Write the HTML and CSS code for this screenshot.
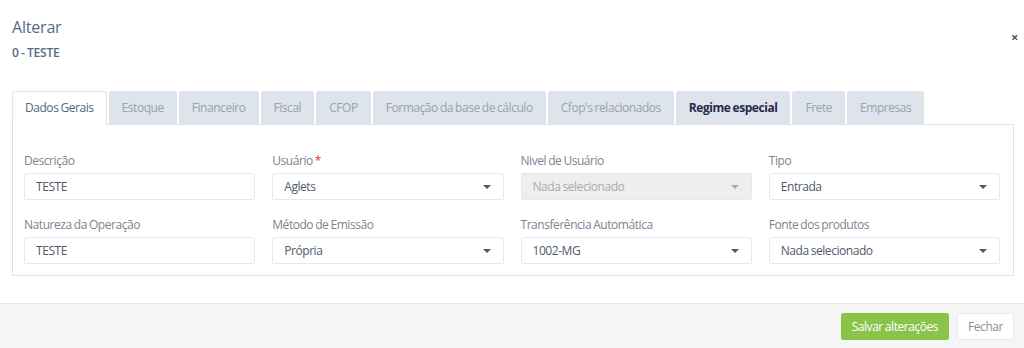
FILE: index.html
```html
<!DOCTYPE html>
<html>
<head>
    <title>Alterar</title>
    <link rel="stylesheet" href="styles.css">
</head>
<body>
    <div class="modal">
        <div class="modal-header">
            <div>
                <h1>Alterar</h1>
                <div class="subtitle">0 - TESTE</div>
            </div>
            <span class="close">&times;</span>
        </div>

        <div class="modal-body">
            <ul class="tabs">
                <li class="tab active">Dados Gerais</li>
                <li class="tab">Estoque</li>
                <li class="tab">Financeiro</li>
                <li class="tab">Fiscal</li>
                <li class="tab">CFOP</li>
                <li class="tab">Formação da base de cálculo</li>
                <li class="tab">Cfop's relacionados</li>
                <li class="tab strong">Regime especial</li>
                <li class="tab">Frete</li>
                <li class="tab">Empresas</li>
            </ul>

            <div class="panel">
                <div class="field">
                    <label>Descrição</label>
                    <div class="input">TESTE</div>
                </div>
                <div class="field">
                    <label>Usuário <span class="req">*</span></label>
                    <div class="input select">Aglets<span class="caret"></span></div>
                </div>
                <div class="field">
                    <label>Nivel de Usuário</label>
                    <div class="input select disabled">Nada selecionado<span class="caret"></span></div>
                </div>
                <div class="field">
                    <label>Tipo</label>
                    <div class="input select">Entrada<span class="caret"></span></div>
                </div>
                <div class="field">
                    <label>Natureza da Operação</label>
                    <div class="input">TESTE</div>
                </div>
                <div class="field">
                    <label>Método de Emissão</label>
                    <div class="input select">Própria<span class="caret"></span></div>
                </div>
                <div class="field">
                    <label>Transferência Automática</label>
                    <div class="input select">1002-MG<span class="caret"></span></div>
                </div>
                <div class="field">
                    <label>Fonte dos produtos</label>
                    <div class="input select">Nada selecionado<span class="caret"></span></div>
                </div>
            </div>
        </div>

        <div class="modal-footer">
            <button class="btn btn-success">Salvar alterações</button>
            <button class="btn btn-default">Fechar</button>
        </div>
    </div>
</body>
</html>
```

FILE: styles.css
```css
body {
    margin: 0;
    background: #fff;
    font-family: 'Open Sans', 'Liberation Sans', sans-serif;
    font-size: 12px;
    letter-spacing: -0.45px;
    word-spacing: -0.6px;
    color: #4b5563;
}
.modal {
    width: 1024px;
    height: 348px;
    display: flex;
    flex-direction: column;
}
.modal-header {
    display: flex;
    justify-content: space-between;
    align-items: flex-start;
    padding: 15px 6px 0 12px;
    height: 76px;
    box-sizing: border-box;
}
.modal-header h1 {
    margin: 0;
    font-size: 16px;
    font-weight: 400;
    letter-spacing: -0.2px;
    color: #566a86;
    line-height: 24px;
}
.subtitle {
    margin-top: 5px;
    font-size: 12px;
    font-weight: 600;
    letter-spacing: -0.2px;
    color: #566a86;
}
.close {
    margin-top: 15px;
    font-size: 13px;
    font-weight: 700;
    color: #4a5a73;
    line-height: 14px;
}
.modal-body {
    padding: 15px 10px 0 12px;
    height: 227px;
    box-sizing: border-box;
}
.tabs {
    list-style: none;
    margin: 0;
    padding: 0;
    display: flex;
    gap: 2px;
    height: 33px;
}
.tab {
    background: #dde4ec;
    border: 1px solid #dde4ec;
    border-bottom: none;
    border-radius: 3px 3px 0 0;
    padding: 0 12px;
    line-height: 32px;
    color: #9aa2ad;
    white-space: nowrap;
}
.tab.active {
    background: #fff;
    border-color: #e1e5ea;
    color: #546683;
    position: relative;
    top: 1px;
    margin-top: -1px;
    padding-bottom: 1px;
}
.tab.strong {
    font-weight: 700;
    color: #2a2a4a;
}
.panel {
    border: 1px solid #dfe3e8;
    display: grid;
    grid-template-columns: repeat(4, 1fr);
    grid-template-rows: auto auto;
    align-content: start;
    column-gap: 17px;
    row-gap: 16px;
    padding: 27px 13px 0 11px;
    height: 152px;
    box-sizing: border-box;
}
.field label {
    display: block;
    color: #7b8491;
    line-height: 18px;
    margin-bottom: 3px;
}
.req {
    color: #e53935;
}
.input {
    border: 1px solid #e6e8eb;
    border-radius: 2px;
    height: 27px;
    box-sizing: border-box;
    padding: 0 11px;
    line-height: 25px;
    color: #4f5b6b;
    display: flex;
    align-items: center;
    justify-content: space-between;
}
.input.disabled {
    background: #eeeeee;
    color: #a7acb2;
}
.caret {
    width: 0;
    height: 0;
    border-left: 4px solid transparent;
    border-right: 4px solid transparent;
    border-top: 4px solid #555;
    margin-right: 1px;
}
.disabled .caret {
    border-top-color: #aaa;
}
.modal-footer {
    flex: 1;
    background: #f5f5f5;
    border-top: 1px solid #e8e8e8;
    display: flex;
    justify-content: flex-end;
    align-items: flex-start;
    gap: 8px;
    padding: 9px 10px 0 0;
}
.btn {
    font-family: inherit;
    font-size: 12px;
    letter-spacing: inherit;
    word-spacing: inherit;
    height: 27px;
    border-radius: 2px;
    padding: 0 10px;
    cursor: pointer;
}
.btn-success {
    background: #8bc34a;
    border: 1px solid #8bc34a;
    color: #fff;
}
.btn-default {
    background: #fff;
    border: 1px solid #eaeaea;
    color: #8a9099;
}
```
